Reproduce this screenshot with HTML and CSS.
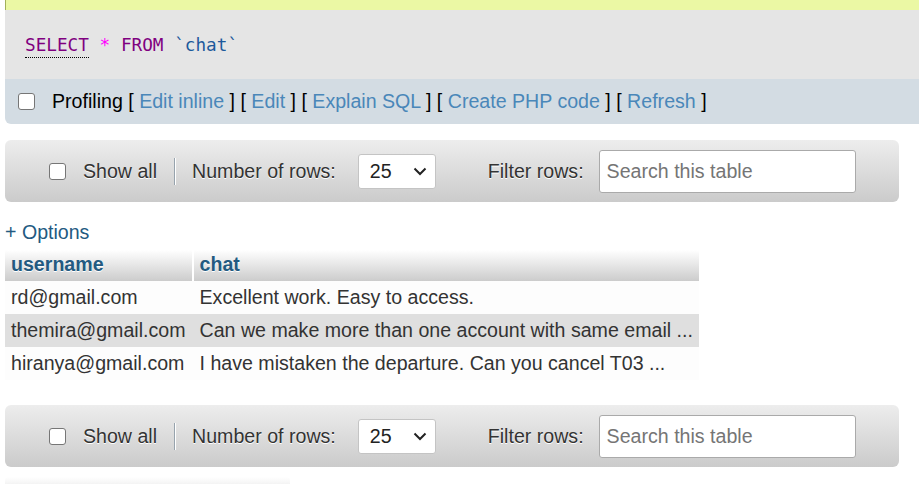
FILE: index.html
```html
<!DOCTYPE html>
<html>
<head>
<meta charset="utf-8">
<link rel="stylesheet" href="styles.css">
</head>
<body>
<div class="notice"></div>
<div class="sqlbox">
  <code class="sql"><span class="kw under">SELECT</span> <span class="star">*</span> <span class="kw">FROM</span> <span class="ident">`chat`</span></code>
</div>
<div class="tools">
  <input type="checkbox" class="cb cb-prof">
  <span class="tools-text">Profiling [ <a>Edit inline</a> ] [ <a>Edit</a> ] [ <a>Explain SQL</a> ] [ <a>Create PHP code</a> ] [ <a>Refresh</a> ]</span>
</div>

<div class="nav nav-top">
  <input type="checkbox" class="cb cb-nav">
  <span class="lbl lbl-show">Show all</span>
  <span class="sep"></span>
  <span class="lbl lbl-num">Number of rows:</span>
  <div class="select"><span>25</span><svg width="14" height="9" viewBox="0 0 14 9"><path d="M1.5 1.5 L7 7 L12.5 1.5" fill="none" stroke="#222" stroke-width="2"/></svg></div>
  <span class="lbl lbl-filter">Filter rows:</span>
  <div class="search">Search this table</div>
</div>

<div class="options">+ Options</div>

<table class="data">
  <thead>
    <tr><th>username</th><th>chat</th></tr>
  </thead>
  <tbody>
    <tr class="odd"><td>rd@gmail.com</td><td>Excellent work. Easy to access.</td></tr>
    <tr class="even"><td>themira@gmail.com</td><td>Can we make more than one account with same email ...</td></tr>
    <tr class="odd"><td>hiranya@gmail.com</td><td>I have mistaken the departure. Can you cancel T03 ...</td></tr>
  </tbody>
</table>

<div class="nav nav-bottom">
  <input type="checkbox" class="cb cb-nav">
  <span class="lbl lbl-show">Show all</span>
  <span class="sep"></span>
  <span class="lbl lbl-num">Number of rows:</span>
  <div class="select"><span>25</span><svg width="14" height="9" viewBox="0 0 14 9"><path d="M1.5 1.5 L7 7 L12.5 1.5" fill="none" stroke="#222" stroke-width="2"/></svg></div>
  <span class="lbl lbl-filter">Filter rows:</span>
  <div class="search">Search this table</div>
</div>

<div class="fieldset-top"></div>
</body>
</html>
```

FILE: styles.css
```css
html, body {
  margin: 0;
  padding: 0;
  background: #fff;
  overflow: hidden;
}
body {
  font-family: "Liberation Sans", Arial, sans-serif;
  font-size: 19.6px;
  color: #333;
  width: 919px;
  height: 484px;
}
.notice {
  height: 10px;
  margin-left: 5px;
  background: #ebf8a4;
  border-left: 1px solid #a2b05a;
}
.sqlbox {
  margin-left: 5px;
  height: 69px;
  background: #e5e5e5;
  display: flex;
  align-items: center;
  padding-left: 20px;
}
.sql {
  font-family: "DejaVu Sans Mono", "Liberation Mono", monospace;
  font-size: 17.7px;
  color: #222;
  white-space: pre;
}
.kw { color: #800080; }
.under {
  border-bottom: 1px dotted #000;
  padding-bottom: 2px;
}
.star { color: #f0f; }
.ident { color: #1d5a9c; }

.tools {
  margin-left: 5px;
  height: 45px;
  background: #d3dce3;
  border-bottom-left-radius: 6px;
  display: flex;
  align-items: center;
}
.tools-text {
  color: #000;
  white-space: pre;
}
.tools-text a {
  color: #4a87b9;
  text-decoration: none;
}
.cb {
  appearance: none;
  -webkit-appearance: none;
  width: 17px;
  height: 17px;
  margin: 0;
  background: #fff;
  border: 1.3px solid #767676;
  border-radius: 3px;
  box-sizing: border-box;
  flex: none;
}
.cb-prof { margin-left: 13px; margin-right: 17px; }

.nav {
  margin: 0 20px 0 5px;
  height: 62px;
  border-radius: 6px;
  background: linear-gradient(#ededed, #cbcbcb);
  display: flex;
  align-items: center;
  text-shadow: 0 1px 0 #fff;
}
.nav-top { margin-top: 16px; }
.nav-bottom { margin-top: 25px; }
.cb-nav { margin-left: 44px; }
.lbl { white-space: pre; color: #333; line-height: 22px; }
.lbl-show { margin-left: 17px; }
.sep {
  margin-left: 17px;
  width: 1px;
  height: 27px;
  background: #97a3ad;
  border-right: 1px solid #fff;
}
.lbl-num { margin-left: 16px; }
.select {
  margin-left: 22px;
  width: 78px;
  height: 35px;
  box-sizing: border-box;
  background: #fff;
  border: 1px solid #c4c4c4;
  border-radius: 3px;
  display: flex;
  align-items: center;
  padding-left: 11px;
  text-shadow: none;
  color: #222;
}
.select span { flex: 1; }
.select svg { margin-right: 8px; }
.lbl-filter { margin-left: 52px; }
.search {
  margin-left: 15px;
  width: 257px;
  height: 43px;
  box-sizing: border-box;
  background: #fff;
  border: 1px solid #aaa;
  border-radius: 3px;
  display: flex;
  align-items: center;
  padding-left: 7px;
  color: #757575;
  text-shadow: none;
}

.options {
  margin: 19px 0 0 5px;
  color: #235a81;
  line-height: 22px;
}

.data {
  margin: 7px 0 0 5px;
  border-collapse: collapse;
  border-spacing: 0;
}
.data th {
  text-align: left;
  font-weight: bold;
  color: #235a81;
  text-shadow: 0 1px 0 #fff;
  background: linear-gradient(#fff, #cccccc);
  padding: 3px 6px 6px;
  line-height: 22px;
  border-right: 2px solid #fff;
}
.data th:last-child { border-right: none; }
.data td {
  padding: 5px 6px 6px;
  line-height: 22px;
  white-space: nowrap;
  color: #333;
}
.data td:first-child { border-right: 2px solid transparent; }
.data tr.odd td { background: #fdfdfd; }
.data tr.even td { background: #dfdfdf; }

.fieldset-top {
  margin: 10px 0 0 5px;
  width: 285px;
  height: 8px;
  background: linear-gradient(#fff, #f2f2f2);
  border-radius: 4px 4px 0 0;
}
```
